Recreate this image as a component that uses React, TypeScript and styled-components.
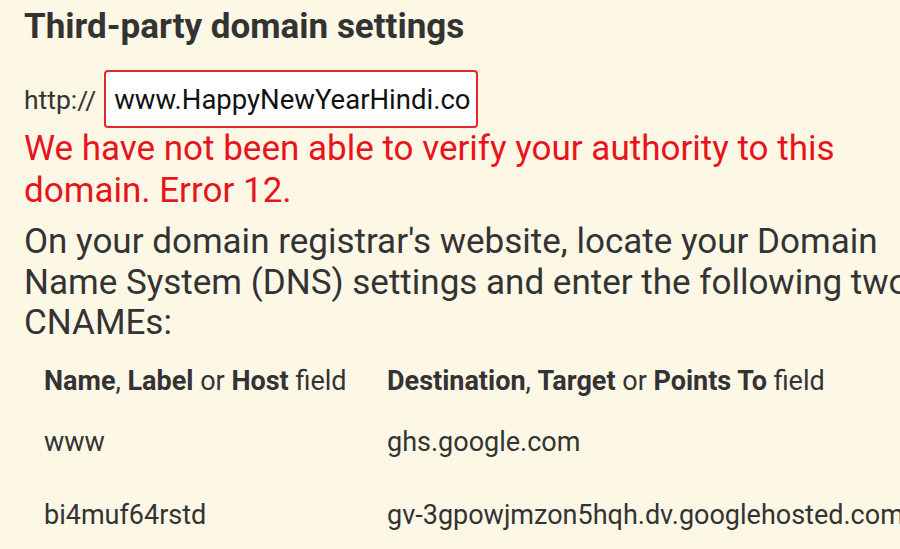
import React from "react";
import styled, { createGlobalStyle } from "styled-components";

const Global = createGlobalStyle`
  html, body { margin: 0; padding: 0; background: #fdf7e6; overflow: hidden; }
  body { font-family: Roboto, "Noto Sans", sans-serif; }
`;

const Page = styled.div`
  width: 920px;
  padding: 7px 0 0 24px;
  color: #333;
`;

const Title = styled.h2`
  margin: 0;
  font-size: 35px;
  font-weight: 700;
  line-height: 40px;
  color: #333;
`;

const UrlRow = styled.div`
  display: flex;
  align-items: center;
  gap: 8px;
  margin-top: 23px;
`;

const Prefix = styled.span`
  font-size: 26.5px;
  color: #333;
`;

const Input = styled.div`
  box-sizing: border-box;
  width: 374px;
  height: 58px;
  padding: 0 8px;
  display: flex;
  align-items: center;
  background: #fff;
  border: 2px solid #e3262b;
  border-radius: 4px;
  font-size: 27.5px;
  color: #111;
  white-space: nowrap;
  overflow: hidden;
`;

const Para = styled.p<{ $error?: boolean }>`
  margin: ${(p) => (p.$error ? "0" : "10px 0 0")};
  font-size: 35px;
  line-height: ${(p) => (p.$error ? "42px" : "40.5px")};
  color: ${(p) => (p.$error ? "#e8141c" : "#333")};
`;

const Table = styled.div`
  display: grid;
  grid-template-columns: 343px auto;
  margin-top: 22px;
  padding-left: 20px;
`;

const Head = styled.div`
  font-size: 27px;
  line-height: 30px;
  color: #333;
  white-space: nowrap;
  b { font-weight: 700; }
`;

const Cell = styled.div<{ $gap: number }>`
  font-size: 27px;
  line-height: 30px;
  margin-top: ${(p) => p.$gap}px;
  color: #333;
  white-space: nowrap;
`;

export default function App() {
  return (
    <>
      <Global />
      <Page>
        <Title>Third-party domain settings</Title>
        <UrlRow>
          <Prefix>http://</Prefix>
          <Input>www.HappyNewYearHindi.co</Input>
        </UrlRow>
        <Para $error>
          We have not been able to verify your authority to this domain. Error 12.
        </Para>
        <Para>
          On your domain registrar's website, locate your Domain Name System (DNS)
          settings and enter the following two CNAMEs:
        </Para>
        <Table>
          <Head>
            <b>Name</b>, <b>Label</b> or <b>Host</b> field
          </Head>
          <Head>
            <b>Destination</b>, <b>Target</b> or <b>Points To</b> field
          </Head>
          <Cell $gap={31}>www</Cell>
          <Cell $gap={31}>ghs.google.com</Cell>
          <Cell $gap={43}>bi4muf64rstd</Cell>
          <Cell $gap={43}>gv-3gpowjmzon5hqh.dv.googlehosted.com</Cell>
        </Table>
      </Page>
    </>
  );
}
